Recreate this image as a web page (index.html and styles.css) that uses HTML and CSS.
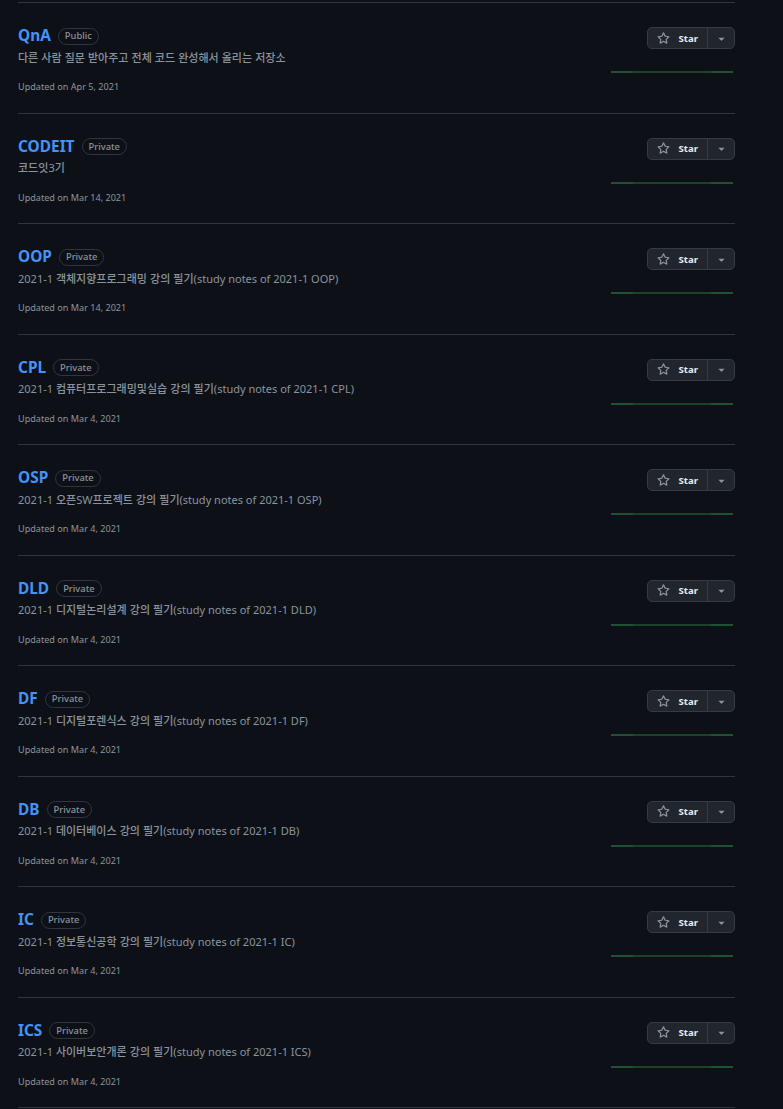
FILE: index.html
```html
<!DOCTYPE html>
<html lang="ko">
<head>
<meta charset="utf-8">
<title>Repositories</title>
<link rel="stylesheet" href="styles.css">
</head>
<body>
<svg width="0" height="0" class="defs" aria-hidden="true">
  <defs>
    <symbol id="star" viewBox="0 0 16 16"><path d="M8 .25a.75.75 0 0 1 .673.418l1.882 3.815 4.21.612a.75.75 0 0 1 .416 1.279l-3.046 2.97.719 4.192a.751.751 0 0 1-1.088.791L8 12.347l-3.766 1.98a.75.75 0 0 1-1.088-.79l.72-4.194L.818 6.374a.75.75 0 0 1 .416-1.28l4.21-.611L7.327.668A.75.75 0 0 1 8 .25Zm0 2.445L6.615 5.5a.75.75 0 0 1-.564.41l-3.097.45 2.24 2.184a.75.75 0 0 1 .216.664l-.528 3.084 2.769-1.456a.75.75 0 0 1 .698 0l2.77 1.456-.53-3.084a.75.75 0 0 1 .216-.664l2.24-2.183-3.096-.45a.75.75 0 0 1-.564-.41L8 2.694Z"/></symbol>
    <symbol id="caret" viewBox="0 0 16 16"><path d="m4.427 7.427 3.396 3.396a.25.25 0 0 0 .354 0l3.396-3.396A.25.25 0 0 0 11.396 7H4.604a.25.25 0 0 0-.177.427Z"/></symbol>
  </defs>
</svg>
<ul class="repo-list">
  <li class="repo">
    <div class="info">
      <h3 class="title"><a class="name" href="#">QnA</a><span class="badge">Public</span></h3>
      <p class="desc"><span class="ko">다른 사람 질문 받아주고 전체 코드 완성해서 올리는 저장소</span></p>
      <p class="updated">Updated on Apr 5, 2021</p>
    </div>
    <div class="side">
      <div class="star-btn"><span class="star-main"><svg class="ico"><use href="#star"/></svg>Star</span><span class="star-drop"><svg class="caret"><use href="#caret"/></svg></span></div>
      <div class="spark"></div>
    </div>
  </li>
  <li class="repo">
    <div class="info">
      <h3 class="title"><a class="name" href="#">CODEIT</a><span class="badge">Private</span></h3>
      <p class="desc"><span class="ko">코드잇</span>3<span class="ko">기</span></p>
      <p class="updated">Updated on Mar 14, 2021</p>
    </div>
    <div class="side">
      <div class="star-btn"><span class="star-main"><svg class="ico"><use href="#star"/></svg>Star</span><span class="star-drop"><svg class="caret"><use href="#caret"/></svg></span></div>
      <div class="spark"></div>
    </div>
  </li>
  <li class="repo">
    <div class="info">
      <h3 class="title"><a class="name" href="#">OOP</a><span class="badge">Private</span></h3>
      <p class="desc">2021-1 <span class="ko">객체지향프로그래밍 강의 필기</span>(study notes of 2021-1 OOP)</p>
      <p class="updated">Updated on Mar 14, 2021</p>
    </div>
    <div class="side">
      <div class="star-btn"><span class="star-main"><svg class="ico"><use href="#star"/></svg>Star</span><span class="star-drop"><svg class="caret"><use href="#caret"/></svg></span></div>
      <div class="spark"></div>
    </div>
  </li>
  <li class="repo">
    <div class="info">
      <h3 class="title"><a class="name" href="#">CPL</a><span class="badge">Private</span></h3>
      <p class="desc">2021-1 <span class="ko">컴퓨터프로그래밍및실습 강의 필기</span>(study notes of 2021-1 CPL)</p>
      <p class="updated">Updated on Mar 4, 2021</p>
    </div>
    <div class="side">
      <div class="star-btn"><span class="star-main"><svg class="ico"><use href="#star"/></svg>Star</span><span class="star-drop"><svg class="caret"><use href="#caret"/></svg></span></div>
      <div class="spark"></div>
    </div>
  </li>
  <li class="repo">
    <div class="info">
      <h3 class="title"><a class="name" href="#">OSP</a><span class="badge">Private</span></h3>
      <p class="desc">2021-1 <span class="ko">오픈</span>SW<span class="ko">프로젝트 강의 필기</span>(study notes of 2021-1 OSP)</p>
      <p class="updated">Updated on Mar 4, 2021</p>
    </div>
    <div class="side">
      <div class="star-btn"><span class="star-main"><svg class="ico"><use href="#star"/></svg>Star</span><span class="star-drop"><svg class="caret"><use href="#caret"/></svg></span></div>
      <div class="spark"></div>
    </div>
  </li>
  <li class="repo">
    <div class="info">
      <h3 class="title"><a class="name" href="#">DLD</a><span class="badge">Private</span></h3>
      <p class="desc">2021-1 <span class="ko">디지털논리설계 강의 필기</span>(study notes of 2021-1 DLD)</p>
      <p class="updated">Updated on Mar 4, 2021</p>
    </div>
    <div class="side">
      <div class="star-btn"><span class="star-main"><svg class="ico"><use href="#star"/></svg>Star</span><span class="star-drop"><svg class="caret"><use href="#caret"/></svg></span></div>
      <div class="spark"></div>
    </div>
  </li>
  <li class="repo">
    <div class="info">
      <h3 class="title"><a class="name" href="#">DF</a><span class="badge">Private</span></h3>
      <p class="desc">2021-1 <span class="ko">디지털포렌식스 강의 필기</span>(study notes of 2021-1 DF)</p>
      <p class="updated">Updated on Mar 4, 2021</p>
    </div>
    <div class="side">
      <div class="star-btn"><span class="star-main"><svg class="ico"><use href="#star"/></svg>Star</span><span class="star-drop"><svg class="caret"><use href="#caret"/></svg></span></div>
      <div class="spark"></div>
    </div>
  </li>
  <li class="repo">
    <div class="info">
      <h3 class="title"><a class="name" href="#">DB</a><span class="badge">Private</span></h3>
      <p class="desc">2021-1 <span class="ko">데이터베이스 강의 필기</span>(study notes of 2021-1 DB)</p>
      <p class="updated">Updated on Mar 4, 2021</p>
    </div>
    <div class="side">
      <div class="star-btn"><span class="star-main"><svg class="ico"><use href="#star"/></svg>Star</span><span class="star-drop"><svg class="caret"><use href="#caret"/></svg></span></div>
      <div class="spark"></div>
    </div>
  </li>
  <li class="repo">
    <div class="info">
      <h3 class="title"><a class="name" href="#">IC</a><span class="badge">Private</span></h3>
      <p class="desc">2021-1 <span class="ko">정보통신공학 강의 필기</span>(study notes of 2021-1 IC)</p>
      <p class="updated">Updated on Mar 4, 2021</p>
    </div>
    <div class="side">
      <div class="star-btn"><span class="star-main"><svg class="ico"><use href="#star"/></svg>Star</span><span class="star-drop"><svg class="caret"><use href="#caret"/></svg></span></div>
      <div class="spark"></div>
    </div>
  </li>
  <li class="repo">
    <div class="info">
      <h3 class="title"><a class="name" href="#">ICS</a><span class="badge">Private</span></h3>
      <p class="desc">2021-1 <span class="ko">사이버보안개론 강의 필기</span>(study notes of 2021-1 ICS)</p>
      <p class="updated">Updated on Mar 4, 2021</p>
    </div>
    <div class="side">
      <div class="star-btn"><span class="star-main"><svg class="ico"><use href="#star"/></svg>Star</span><span class="star-drop"><svg class="caret"><use href="#caret"/></svg></span></div>
      <div class="spark"></div>
    </div>
  </li>
</ul>
</body>
</html>
```
FILE: styles.css
```css
html, body {
  margin: 0;
  padding: 0;
  background: #0d1117;
}
body {
  font-family: "Noto Sans", "Noto Sans CJK KR", sans-serif;
  color: #8b949e;
}
.defs {
  position: absolute;
  width: 0;
  height: 0;
  overflow: hidden;
}
.repo-list {
  list-style: none;
  margin: 2px 0 0 18px;
  padding: 0;
  width: 717px;
  border-top: 1px solid #30363d;
}
.repo {
  display: flex;
  justify-content: space-between;
  align-items: flex-start;
  padding: 21px 0 17.5px;
  border-bottom: 1px solid #30363d;
}
.info {
  flex: 1;
  min-width: 0;
}
.title {
  margin: 0;
  height: 24px;
  display: flex;
  align-items: center;
  gap: 7px;
  font-size: 15.4px;
  line-height: 24px;
  font-weight: 700;
}
.name {
  color: #4493f8;
  text-decoration: none;
}
.badge {
  display: inline-flex;
  align-items: center;
  height: 15px;
  padding: 0 6px;
  border: 1px solid #30363d;
  border-radius: 2em;
  font-size: 9.4px;
  font-weight: 500;
  color: #8b949e;
  margin-top: 0;
}
.desc {
  margin: -0.5px 0 0;
  height: 18px;
  overflow: hidden;
  font-size: 11px;
  line-height: 18px;
  color: #8b949e;
  white-space: nowrap;
}
.ko {
  font-family: "Noto Sans CJK KR", sans-serif;
  font-weight: 500;
}
.updated {
  margin: 13.5px 0 0;
  height: 16px;
  font-size: 9.1px;
  line-height: 16px;
  color: #8b949e;
}
.side {
  width: 124px;
  display: flex;
  flex-direction: column;
  align-items: flex-end;
  padding-top: 3px;
}
.star-btn {
  display: flex;
  height: 20px;
  border: 1px solid #363b42;
  border-radius: 5px;
  background: #21262d;
  color: #e6edf3;
  font-size: 9.6px;
  font-weight: 700;
}
.star-main {
  display: flex;
  align-items: center;
  gap: 9px;
  padding: 0 9px 0 9px;
  border-right: 1px solid #363b42;
}
.ico {
  width: 13px;
  height: 13px;
  fill: #8b949e;
}
.star-drop {
  display: flex;
  align-items: center;
  justify-content: center;
  width: 26px;
}
.caret {
  width: 13px;
  height: 13px;
  fill: #8b949e;
}
.spark {
  margin-top: 22px;
  margin-right: 2px;
  width: 122px;
  height: 2px;
  background: linear-gradient(to right, #1e5233 0, #1e5233 22px, #1a4329 22px, #1a4329 100px, #1e5233 100px);
}
```
